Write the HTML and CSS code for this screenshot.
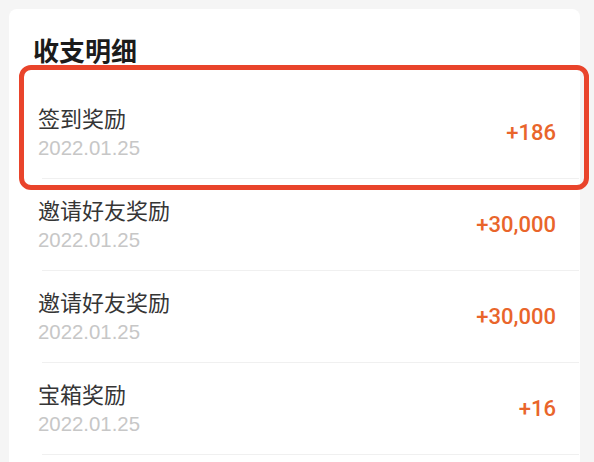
FILE: index.html
```html
<!DOCTYPE html>
<html lang="zh-CN">
<head>
<meta charset="utf-8">
<title>收支明细</title>
<link rel="stylesheet" href="styles.css">
</head>
<body>
<div class="page">
  <section class="card">
    <h1 class="title">收支明细</h1>
    <ul class="list">
      <li class="row">
        <div class="info"><div class="name">签到奖励</div><div class="date">2022.01.25</div></div>
        <div class="amount">+186</div>
      </li>
      <li class="row">
        <div class="info"><div class="name">邀请好友奖励</div><div class="date">2022.01.25</div></div>
        <div class="amount">+30,000</div>
      </li>
      <li class="row">
        <div class="info"><div class="name">邀请好友奖励</div><div class="date">2022.01.25</div></div>
        <div class="amount">+30,000</div>
      </li>
      <li class="row">
        <div class="info"><div class="name">宝箱奖励</div><div class="date">2022.01.25</div></div>
        <div class="amount">+16</div>
      </li>
    </ul>
  </section>
  <div class="highlight"></div>
</div>
</body>
</html>
```
FILE: styles.css
```css
html, body {
  margin: 0;
  padding: 0;
  background: #f5f5f5;
}
body {
  font-family: "Noto Sans CJK SC", "Noto Sans", sans-serif;
  height: 462px;
  overflow: hidden;
}
.page {
  position: relative;
  padding: 9px 14px 0 9px;
}
.card {
  background: #ffffff;
  border-radius: 8px 8px 0 0;
  padding: 23px 0 0 29px;
  height: 430px;
}
.title {
  margin: 0 0 19px -5px;
  font-size: 26px;
  line-height: 36px;
  font-weight: 700;
  color: #1b1b1b;
}
.list {
  list-style: none;
  margin: 0 0 0 4px;
  padding: 0;
}
.row {
  height: 91px;
  display: flex;
  align-items: center;
  justify-content: space-between;
  border-bottom: 1px solid #f0f0f0;
  padding-right: 23px;
  margin-right: 1px;
}
.info {
  margin-left: -4px;
}
.name {
  font-size: 22px;
  line-height: 30px;
  color: #353535;
}
.date {
  font-family: "Liberation Sans", Arial, sans-serif;
  font-size: 20.4px;
  line-height: 32px;
  color: #c7c7c7;
}
.amount {
  font-family: Roboto, "Liberation Sans", sans-serif;
  font-weight: 500;
  font-size: 22px;
  color: #e9652b;
}
.highlight {
  position: absolute;
  left: 19px;
  top: 65px;
  width: 560px;
  height: 115px;
  border: 5px solid #e9442b;
  border-radius: 12px;
}
```
